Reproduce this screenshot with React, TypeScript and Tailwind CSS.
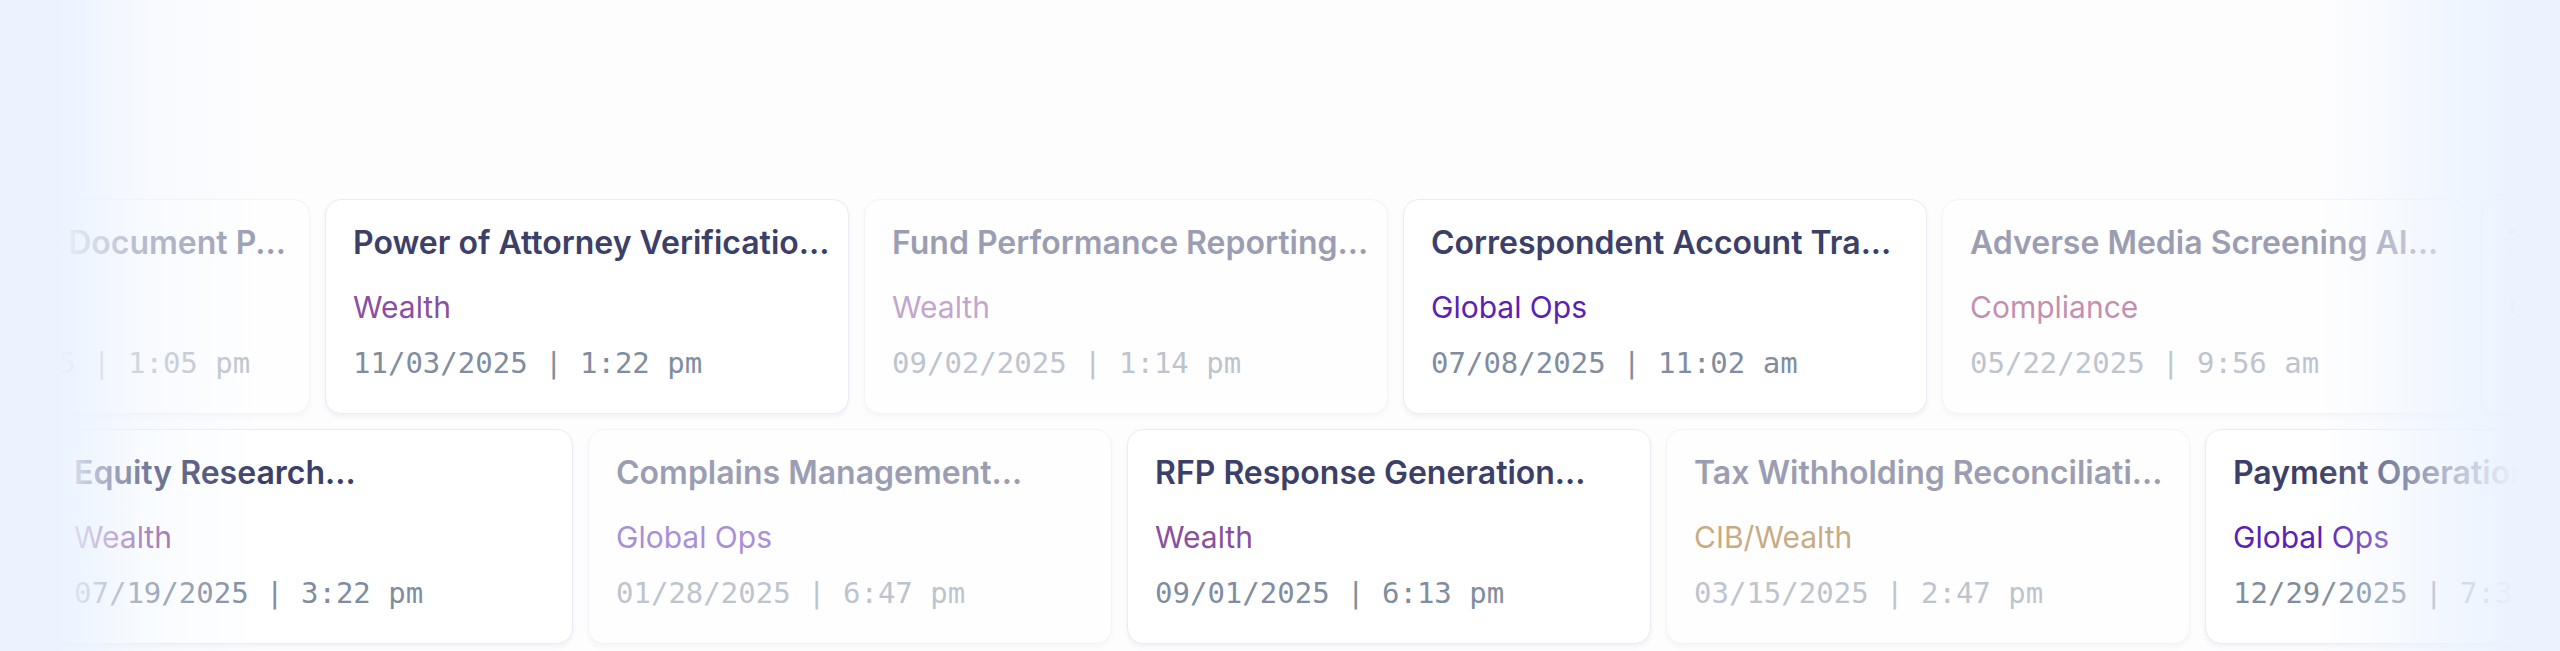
import { clsx } from "clsx";

type Card = {
  title: string;
  category: string;
  date: string;
  width: string;
  dim?: boolean;
};

const CATEGORY_COLORS: Record<string, string> = {
  Wealth: "text-[#8a4f9e]",
  "Global Ops": "text-[#5b21b6]",
  Compliance: "text-[#8c1f66]",
  "CIB/Wealth": "text-[#975b0a]",
};

const TOP_ROW: Card[] = [
  { title: "Statement Document P...", category: "Wealth", date: "08/14/2025 | 1:05 pm", width: "w-[437px]", dim: true },
  { title: "Power of Attorney Verificatio...", category: "Wealth", date: "11/03/2025 | 1:22 pm", width: "w-[524px]" },
  { title: "Fund Performance Reporting...", category: "Wealth", date: "09/02/2025 | 1:14 pm", width: "w-[524px]", dim: true },
  { title: "Correspondent Account Tra...", category: "Global Ops", date: "07/08/2025 | 11:02 am", width: "w-[524px]" },
  { title: "Adverse Media Screening AI...", category: "Compliance", date: "05/22/2025 | 9:56 am", width: "w-[524px]", dim: true },
  { title: "Trade Confirmation Matchi...", category: "CIB/Wealth", date: "10/17/2025 | 4:38 pm", width: "w-[524px]" },
];

const BOTTOM_ROW: Card[] = [
  { title: "Equity Research...", category: "Wealth", date: "07/19/2025 | 3:22 pm", width: "w-[527px]" },
  { title: "Complains Management...", category: "Global Ops", date: "01/28/2025 | 6:47 pm", width: "w-[524px]", dim: true },
  { title: "RFP Response Generation...", category: "Wealth", date: "09/01/2025 | 6:13 pm", width: "w-[524px]" },
  { title: "Tax Withholding Reconciliati...", category: "CIB/Wealth", date: "03/15/2025 | 2:47 pm", width: "w-[524px]", dim: true },
  { title: "Payment Operations Exceptio...", category: "Global Ops", date: "12/29/2025 | 7:36 pm", width: "w-[524px]" },
];

function TaskCard({ card }: { card: Card }) {
  return (
    <div
      className={clsx(
        "flex h-[215px] shrink-0 flex-col rounded-2xl border border-[#ebebf5] bg-white pl-[27px] pr-4 pt-[25px] shadow-[0_3px_4px_rgba(110,110,170,0.08)]",
        card.width,
        card.dim && "opacity-50",
      )}
    >
      <p className="overflow-hidden whitespace-nowrap font-['Inter',sans-serif] text-[32px] font-semibold leading-9 text-[#3c3f68]">
        {card.title}
      </p>
      <p
        className={clsx(
          "mt-[28px] whitespace-nowrap font-['Inter',sans-serif] text-[30px] leading-9",
          CATEGORY_COLORS[card.category],
        )}
      >
        {card.category}
      </p>
      <p className="mt-5 whitespace-pre font-['DejaVu_Sans_Mono',monospace] text-[29px] leading-9 text-[#7f8d9f]">
        {card.date}
      </p>
    </div>
  );
}

export default function App() {
  return (
    <div className="relative h-[651px] w-[2560px] overflow-hidden bg-[#fdfdfe]">
      <div className="flex flex-col gap-[15px] pt-[199px]">
        <div className="-ml-[127px] flex gap-[15px]">
          {TOP_ROW.map((card) => (
            <TaskCard key={card.title} card={card} />
          ))}
        </div>
        <div className="ml-[46px] flex gap-[15px]">
          {BOTTOM_ROW.map((card) => (
            <TaskCard key={card.title} card={card} />
          ))}
        </div>
      </div>

      {/* edge fades */}
      <div className="pointer-events-none absolute inset-y-0 left-0 w-[260px] bg-[linear-gradient(to_right,#ebf3fe_0%,#ebf3fe_22%,rgba(235,243,254,0.8)_32%,rgba(235,243,254,0.35)_55%,rgba(235,243,254,0)_100%)]" />
      <div className="pointer-events-none absolute inset-y-0 right-0 w-[240px] bg-[linear-gradient(to_left,#ebf3fe_0%,#ebf3fe_18%,rgba(235,243,254,0.7)_45%,rgba(235,243,254,0)_100%)]" />
    </div>
  );
}
